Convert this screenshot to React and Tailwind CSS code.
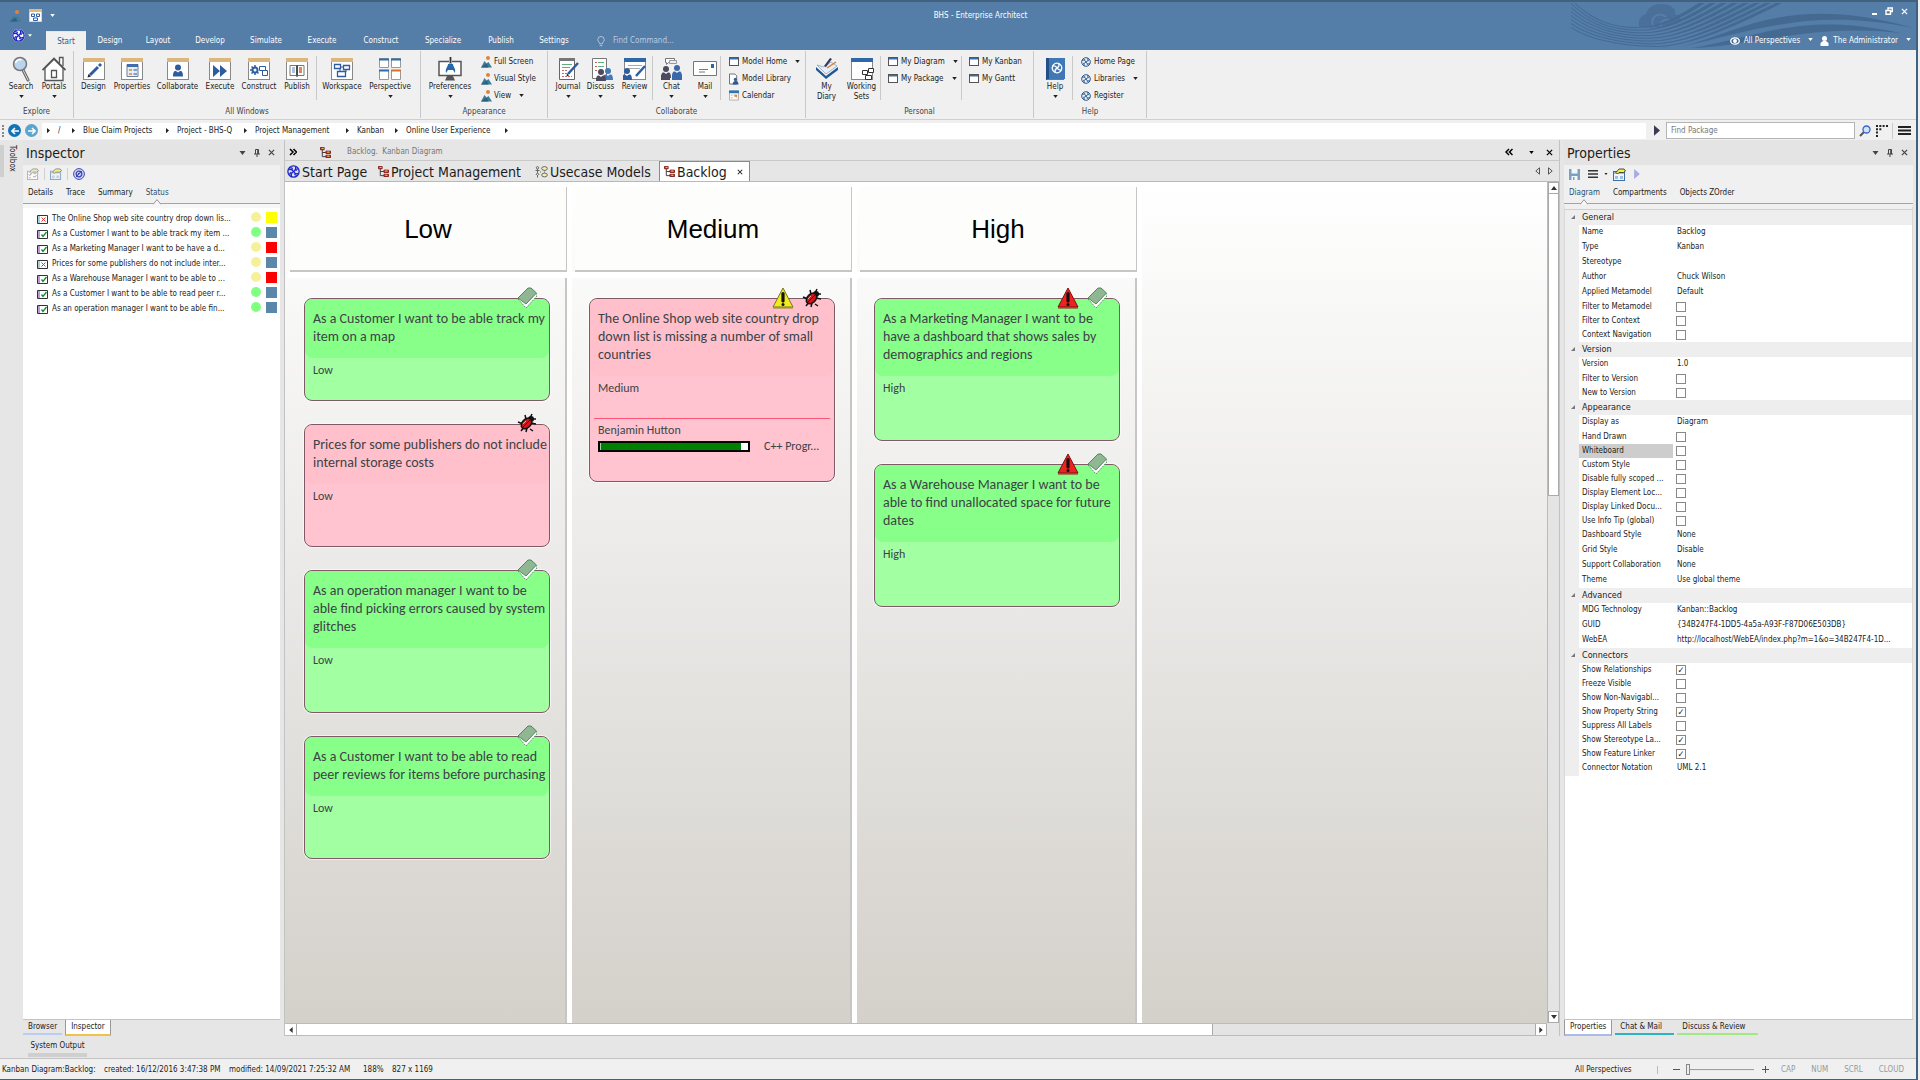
import React, { useState } from 'react'

/* ---------- small icons ---------- */

const Logo = ({ className = 'size-3', color = '#2b5c94' }) => (
  <svg viewBox="0 0 12 12" className={className} fill="none" stroke={color} strokeWidth="1.2">
    <circle cx="6" cy="6" r="5.2" />
    <path d="M1.5 4.2c2.5-1 3.5.3 4.5 1.8s2.300 2.800 4.500 1.800M7.800 1.500c1 2.500-.3 3.500-1.800 4.500s-2.800 2.300-1.800 4.500" />
    <path d="M3 2.500c1 0 2 .5 2.300 1.500M9.500 3c0 1-.5 2-1.500 2.300M9 9.500c-1 0-2-.5-2.300-1.500M2.500 9c0-1 .5-2 1.500-2.300" />
  </svg>
)

const Down = ({ className = 'w-[5px] h-[3px]' }) => (
  <svg viewBox="0 0 6 4" className={className} fill="currentColor"><path d="M0 0h6L3 4z" /></svg>
)

const Right = ({ className = 'w-1 h-[7px]' }) => (
  <svg viewBox="0 0 4 7" className={className} fill="currentColor"><path d="M0 0l4 3.500-4 3.500z" /></svg>
)

const Cross = ({ className = 'size-[7px]' }) => (
  <svg viewBox="0 0 8 8" className={className} stroke="currentColor" strokeWidth="1.400"><path d="M1 1l6 6M7 1L1 7" /></svg>
)

const Pin = () => (
  <svg viewBox="0 0 8 8" className="size-2" fill="none" stroke="#444"><path d="M2.500 5V.5h3V5M4.700 1v4M1 5h6M4 5v3" /></svg>
)

const Hill = ({ className = 'w-[11px] h-3' }) => (
  <svg viewBox="0 0 11 12" className={className}>
    <circle cx="7" cy="2" r="2" fill="#e0823d" />
    <path d="M0 11.500L3.500 5l2 2.500L7.500 6l3.500 5.500z" fill="#3b7f94" />
    <path d="M0 11.500l5.500-4 2 4z" fill="#2f5f86" />
  </svg>
)

const Tree = () => (
  <svg viewBox="0 0 12 12" className="size-[11px]">
    <path d="M2.500 3v7.500h4M2.500 6h4" fill="none" stroke="#333" />
    <path d="M.5.5h4v2.500h-4zM6.500 4.500h5V7h-5zM6.500 9h5v2.500h-5z" fill="#d9533c" stroke="#7a1616" />
    <path d="M8 5.500h2M8 10h2M2 1.500h2" stroke="#f3cf5a" />
  </svg>
)

const UseCase = () => (
  <svg viewBox="0 0 13 12" className="w-[13px] h-3" fill="#f5efb0" stroke="#666">
    <circle cx="2.500" cy="1.800" r="1.200" /><path d="M2.500 3v3.500M.5 4.500h4M1 9l1.500-2.500L4 9M2.500 9v2.500" fill="none" />
    <ellipse cx="9.500" cy="2.500" rx="2.800" ry="1.900" /><ellipse cx="9.500" cy="9" rx="2.800" ry="1.900" />
    <path d="M9.500 4.500V7M5 6h2" strokeDasharray="1 1" />
  </svg>
)

const MiniWindow = () => (
  <svg viewBox="0 0 10 9" className="w-[10px] h-[9px]" fill="#fff"><rect x=".5" y=".5" width="9" height="8" stroke="#555" /><path d="M1 1h8v1.500H1z" fill="#3470ad" /></svg>
)

const MiniLibrary = () => (
  <svg viewBox="0 0 11 12" className="w-[10px] h-3"><path d="M.5.5h6l2 2v9h-8z" fill="#fff" stroke="#666" /><circle cx="7" cy="6.500" r="1.800" fill="#3a5ba0" /><path d="M4 12c0-5 6.500-5 6.500 0z" fill="#2f568f" /></svg>
)

const MiniCalendar = () => (
  <svg viewBox="0 0 11 11" className="w-[10px] h-[11px]"><path d="M.5.5h10v10H.5z" fill="#fff" stroke="#aaa" /><path d="M0 0h11v3H0z" fill="#2f75b5" /><path d="M2 5h2M5 5h1M2 8h2M8 8h1" stroke="#aaa" /><path d="M6 4.500h3v2.500H6z" fill="#e48330" /></svg>
)

const PropWindow = ({ dim }) => (
  <svg viewBox="0 0 13 13" className={dim ? 'size-3 opacity-60' : 'size-[13px]'}>
    <rect x=".5" y="3.500" width="11" height="9" fill="#eef4fb" stroke="#3e6fa3" />
    <path d="M1 4h10v2H1zM2 8h3v3H2zM7 8h3v3H7z" fill="#9dbfe0" />
    <path d="M3 4.500L6 1h5l1.500 2-2 1.500H6L4.500 6z" fill="#f4ef4a" stroke="#222" strokeWidth=".8" />
  </svg>
)

const ListWindow = () => (
  <svg viewBox="0 0 13 13" className="size-3 opacity-60">
    <rect x=".5" y="3.500" width="11" height="9" fill="#fff" stroke="#888" />
    <path d="M2 7l1 1 2-2M7 9l1 1 2-2" fill="none" stroke="#444" /><path d="M2 10.500h2M7 6h3" stroke="#888" />
    <path d="M3 4.500L6 1h5l1.500 2-2 1.500H6L4.500 6z" fill="#e8e3a0" stroke="#444" strokeWidth=".8" />
  </svg>
)

/* ---------- ribbon icons ---------- */

const Frame = ({ children, head = '#dcb67a' }) => (
  <svg viewBox="0 0 24 24" className="size-6">
    <rect x="1.500" y="1.500" width="21" height="21" fill="#fff" stroke="#888" />
    <path d="M1 1h22v4H1z" fill={head} />
    {children}
  </svg>
)

const Person = ({ x = 0, y = 0, fill = '#2e5d9f' }) => (
  <g transform={`translate(${x} ${y})`} fill={fill}>
    <circle cx="5" cy="3" r="3" />
    <path d="M0 12c0-7 3-6 5-4 2-2 5-3 5 4z" />
  </g>
)

const icons = {
  Search: (
    <svg viewBox="0 0 24 26" className="w-6 h-[26px]">
      <path d="M14 14l5 10" stroke="#666" strokeWidth="3" strokeLinecap="round" />
      <path d="M14 14l5 10" stroke="#ddd" strokeLinecap="round" />
      <circle cx="11" cy="8" r="6.500" fill="#b9d4ee" stroke="#777" strokeWidth="1.500" />
      <path d="M6.500 7c1-3 4-4 6-3" stroke="#fff" strokeWidth="1.500" fill="none" />
    </svg>
  ),
  Portals: (
    <svg viewBox="0 0 24 26" className="w-6 h-[26px]" fill="#fff" stroke="#555" strokeWidth="1.300">
      <path d="M17.500 7V1.500H21V10" /><path d="M3 12v12.500h18V12l-9-9z" /><path d="M.5 14L12 2.500 23.500 14" fill="none" strokeWidth="1.800" /><path d="M9.500 14.500h5v7h-5z" />
    </svg>
  ),
  Design: <Frame><path d="M8 18l8-8" stroke="#2e5d9f" strokeWidth="3" /><path d="M17 9l2-2" stroke="#2e5d9f" strokeWidth="3" /><path d="M5.500 20.500l1-3.500 2.500 2.500z" fill="#222" /></Frame>,
  Properties: <Frame><path d="M7 7.500h11v12H7z" fill="#e7edf5" stroke="#6a7f9a" /><path d="M7 7h11v3H7z" fill="#3f6ea8" /><path d="M9 12h3v2H9zM9 16h3v2H9z" fill="#d9a15b" /><path d="M13.500 12H17v2h-3.500zM13.500 16H17v2h-3.500z" fill="#7f9fc4" /></Frame>,
  Collaborate: <Frame><Person x={7} y={7.500} /></Frame>,
  Execute: <Frame><path d="M5 8l7 6-7 6zM12 8l7 6-7 6z" fill="#2e5d9f" /></Frame>,
  Construct: (
    <Frame>
      <circle cx="8" cy="13" r="2.500" fill="#fff" stroke="#2e5d9f" strokeWidth="2" /><path d="M8 8v2M8 16v2M3 13h2M4.500 9.500L6 11M11.500 16.500L10 15M4.500 16.500L6 15" stroke="#2e5d9f" strokeWidth="1.500" />
      <path d="M12.500 9.500h6v4h-6zM15.500 13.500h5v5h-5z" fill="#fff" stroke="#2e5d9f" />
    </Frame>
  ),
  Publish: <Frame><path d="M5 8.500h6.500v10H5zM12.500 8.500H19v10h-6.500z" fill="#fff" stroke="#777" /><path d="M12 8v12" stroke="#222" /><path d="M7 11h3M7 13h3M7 15h3" stroke="#5c86bd" /><path d="M14 10h3v6h-3z" fill="#dc8a55" /></Frame>,
  Workspace: <Frame><path d="M4.500 7.500h6v4h-6zM13.500 8.500h6v4h-6zM7.500 14.500h8v5h-8z" fill="#fff" stroke="#2e5d9f" strokeWidth="1.300" /><path d="M10 10h4M10 12v3M16 12v3" stroke="#2e5d9f" /></Frame>,
  Perspective: (
    <svg viewBox="0 0 24 24" className="size-6" fill="#fff" stroke="#999">
      <path d="M1.500 1.500h9v9h-9zM13.500 1.500h9v9h-9zM1.500 13.500h9v9h-9zM13.500 13.500h9v9h-9z" />
      <path d="M1 2.500h10M13 2.500h10M1 13.500h10" stroke="#2e6dac" strokeWidth="2" /><path d="M13 13.500h10" stroke="#d9702c" strokeWidth="2" />
    </svg>
  ),
  Preferences: (
    <svg viewBox="0 0 24 24" className="size-6">
      <path d="M1 4.500h22v14H1z" fill="#fff" stroke="#555" strokeWidth="1.500" /><path d="M9 19h6l2 4.500H7z" fill="#555" />
      <path d="M11 0h3v8h-3z" fill="#e39b3b" /><path d="M12.500 0v6" stroke="#333" />
      <path d="M8 16c-1-5 2-6 2-9h5c0 3 3 4 2 9l-2-3h-5z" fill="#2668ad" />
    </svg>
  ),
  Journal: (
    <svg viewBox="0 0 24 24" className="size-6">
      <path d="M3.500 1.500h15v21h-15z" fill="#fff" stroke="#666" /><path d="M3 1h16v3H3z" fill="#777" />
      <path d="M6 7.500h10M6 10.500h8" stroke="#5fae7d" /><path d="M6 13.500h6M6 16.500h6M6 19.500h10" stroke="#c56e6e" strokeDasharray="2 1" />
      <path d="M12 17L22 6" stroke="#2e5d9f" strokeWidth="2.500" /><path d="M10.500 19.500l.5-3 2 2z" fill="#222" />
    </svg>
  ),
  Discuss: (
    <svg viewBox="0 0 24 24" className="size-6">
      <path d="M3.500 1.500h14v20h-14z" fill="#fff" stroke="#777" /><path d="M6 5.500h2M6 9.500h2M6 13.500h2" stroke="#d05a5a" /><path d="M9 5.500h6M9 9.500h6" stroke="#5fae7d" />
      <Person x={14} y={11} fill="#4379b8" /><Person x={7} y={12} fill="#4b4a5e" />
    </svg>
  ),
  Review: (
    <Frame head="#2f68a8"><path d="M5 8.500h14M5 11.500h12" stroke="#aaa" /><path d="M13 19l9-10" stroke="#2e5d9f" strokeWidth="2.500" /><Person x={-1} y={11} /></Frame>
  ),
  Chat: (
    <svg viewBox="0 0 24 24" className="size-6">
      <path d="M5.500 1.500h9v4h-6l-2 2v-2h-1z" fill="#fff" stroke="#777" /><path d="M9.500 3.500h7v3h-7z" fill="#eee" stroke="#999" />
      <Person x={1} y={9} fill="#4b4a5e" /><path d="M1 18h9v5H1z" fill="#4b4a5e" /><Person x={12} y={8} fill="#3a68a8" /><path d="M12 18h10v5H12z" fill="#3a68a8" />
    </svg>
  ),
  Mail: (
    <svg viewBox="0 0 24 24" className="size-6"><path d="M.5 4.500h23v14H.5z" fill="#fff" stroke="#777" /><path d="M18 7h3v4h-3z" fill="#2668ad" /><path d="M6 12.500h9M6 15h6" stroke="#777" /></svg>
  ),
  Diary: (
    <svg viewBox="0 0 24 24" className="size-6"><path d="M1 10l10 9 12-9v3l-12 9L1 13z" fill="#1f5792" /><path d="M2 8l9 9 11-8-6-4-7 5z" fill="#e9eef5" stroke="#8ea3bd" strokeWidth=".8" /><path d="M9 9l6-8 2 1-6 8z" fill="#3a3a55" /><path d="M12 11L21 5" stroke="#d38235" strokeWidth="1.500" /></svg>
  ),
  Sets: (
    <Frame head="#2f68a8"><path d="M12.500 13.500h5v4h-5zM18.500 11.500h5v4h-5zM15.500 18.500h6v4h-6z" fill="#fff" stroke="#333" /></Frame>
  ),
  Help: (
    <svg viewBox="0 0 24 24" className="size-6"><path d="M3 1h19v21H3z" fill="#3f78b5" /><path d="M3 1h3v22H3z" fill="#234f86" /><path d="M4 22.500h17" stroke="#777" /><g transform="translate(8 5)" fill="none" stroke="#fff" strokeWidth="1.300"><circle cx="6" cy="6" r="4.800" /><path d="M1.500 4.200c3-1 3.500.5 4.500 1.800s2 2.800 4.500 1.800M7.800 1.500c1 3-.5 3.500-1.800 4.500s-2.800 2-1.800 4.500" /></g></svg>
  ),
}

/* ---------- ribbon ---------- */

const Big = ({ icon, label, second, arrow, className }) => (
  <button className={`${className} flex flex-col items-center shrink-0 pt-[5px]`}>
    <span className="h-[26px] flex items-center">{icons[icon]}</span>
    <span className="leading-[10px] whitespace-nowrap">{label}</span>
    {second && <span className="leading-[9px]">{second}</span>}
    {arrow && <Down className="w-[5px] h-[3px] mt-[3px]" />}
  </button>
)

const Small = ({ icon, label, arrow }) => (
  <button className="flex items-center h-[17px] whitespace-nowrap">
    <span className="w-[13px] flex shrink-0">{icon}</span>
    {label}
    {arrow && <Down className="w-[5px] h-[3px] ml-2" />}
  </button>
)

const Stack = ({ children, className }) => <div className={`${className} flex flex-col pt-[2px] shrink-0`}>{children}</div>

const Sep = () => <span className="w-px h-11 mt-[5px] bg-[#c9c9c9] shrink-0"></span>

const Group = ({ title, className, children }) => (
  <section className={`${className} shrink-0 h-[67px] mt-px border-r border-[#c9c9c9] flex flex-col justify-between`}>
    <div className="flex px-1">{children}</div>
    <h2 className="text-center leading-3 text-[#444]">{title}</h2>
  </section>
)

const Ribbon = () => (
  <div className="h-[70px] flex bg-[#f0f0f0] border-b border-[#cfcfcf] text-[#222] overflow-hidden">
    <Group title="Explore" className="w-[74px]">
      <Big icon="Search" label="Search" arrow className="w-[34px]" />
      <Big icon="Portals" label="Portals" arrow className="w-[32px]" />
    </Group>
    <Group title="All Windows" className="w-[347px]">
      <Big icon="Design" label="Design" className="w-[31px]" />
      <Big icon="Properties" label="Properties" className="w-[46px]" />
      <Big icon="Collaborate" label="Collaborate" className="w-[45px]" />
      <Big icon="Execute" label="Execute" className="w-10" />
      <Big icon="Construct" label="Construct" className="w-[38px]" />
      <Big icon="Publish" label="Publish" className="w-[38px]" />
      <Sep />
      <Big icon="Workspace" label="Workspace" className="w-[50px]" />
      <Big icon="Perspective" label="Perspective" arrow className="w-[46px]" />
    </Group>
    <Group title="Appearance" className="w-[127px]">
      <Big icon="Preferences" label="Preferences" arrow className="w-[50px]" />
      <Stack className="ml-[6px]">
        <Small icon={<Hill />} label="Full Screen" />
        <Small icon={<Hill />} label="Visual Style" />
        <Small icon={<Hill />} label="View" arrow />
      </Stack>
    </Group>
    <Group title="Collaborate" className="w-[258px]">
      <Big icon="Journal" label="Journal" arrow className="w-8" />
      <Big icon="Discuss" label="Discuss" arrow className="w-[33px]" />
      <Big icon="Review" label="Review" arrow className="w-[35px]" />
      <Sep />
      <Big icon="Chat" label="Chat" arrow className="w-[37px]" />
      <Big icon="Mail" label="Mail" arrow className="w-[30px]" />
      <Sep />
      <Stack className="ml-2">
        <Small icon={<MiniWindow />} label="Model Home" arrow />
        <Small icon={<MiniLibrary />} label="Model Library" />
        <Small icon={<MiniCalendar />} label="Calendar" />
      </Stack>
    </Group>
    <Group title="Personal" className="w-[228px]">
      <Big icon="Diary" label="My" second="Diary" className="w-[33px]" />
      <Big icon="Sets" label="Working" second="Sets" className="w-[37px]" />
      <Sep />
      <Stack className="ml-[7px] w-[73px]">
        <Small icon={<MiniWindow />} label="My Diagram" arrow />
        <Small icon={<MiniWindow />} label="My Package" arrow />
      </Stack>
      <Sep />
      <Stack className="ml-[7px]">
        <Small icon={<MiniWindow />} label="My Kanban" />
        <Small icon={<MiniWindow />} label="My Gantt" />
      </Stack>
    </Group>
    <Group title="Help" className="w-[113px]">
      <Big icon="Help" label="Help" arrow className="w-[34px]" />
      <Sep />
      <Stack className="ml-2">
        <Small icon={<Logo className="size-[10px]" />} label="Home Page" />
        <Small icon={<Logo className="size-[10px]" />} label="Libraries" arrow />
        <Small icon={<Logo className="size-[10px]" />} label="Register" />
      </Stack>
    </Group>
  </div>
)

/* ---------- title bar ---------- */

const menu = [
  ['Start', 'w-10'], ['Design', 'w-12'], ['Layout', 'w-12'], ['Develop', 'w-14'], ['Simulate', 'w-14'], ['Execute', 'w-14'],
  ['Construct', 'w-[62px]'], ['Specialize', 'w-[62px]'], ['Publish', 'w-[54px]'], ['Settings', 'w-[52px]'],
]

// thin at the left, wider where it leaves through the top edge
const wave = (k) => {
  const low = 24 + 2.700 * k
  return `M0 ${4 * k - 4}C20 ${16 + 3 * k} ${40 + 2 * k} ${low} ${65 + 3 * k} ${low}S${105 + 8 * k} ${14 + k} ${128 + 11 * k} 0h6` +
    `C${110 + 8 * k} ${16 + k} ${90 + 4 * k} ${low + 1} ${65 + 3 * k} ${low + 1}S20 ${17 + 3 * k} 0 ${4 * k - 3}z`
}

const Waves = () => (
  <svg viewBox="0 0 345 46" className="absolute right-0 top-[1px] w-[345px] h-[46px]" fill="#456a92">
    <path d="M68 24c-1-7 2-12 7-13 2-9 12-12 22-9 6 2 8 6 7 9 5 2 7 5 6 7-8 5-22 8-42 6z" fill="#4a7099" />
    <path d="M82 23c-3-9 5-15 13-9M90 24c-2-6 5-9 10-6" fill="none" stroke="#547da8" strokeWidth="2" />
    {[0, 1, 2, 3, 4, 5, 6, 7].map((k) => <path key={k} d={wave(k)} />)}
    <path d="M110 44C170 28 220-10 343 25 240 5 190 26 110 44z" />
    <path d="M120 45C190 34 230 8 330 30 240 20 190 42 120 45z" />
  </svg>
)

const TitleBar = () => (
  <header className="relative h-[50px] bg-[#547da8] border-t-2 border-[#41617f] text-white flex flex-col justify-between">
    <Waves />
    <div className="relative flex items-center justify-between h-[28px] pl-[10px] pr-2">
      <div className="flex items-center gap-2">
        <Hill />
        <svg viewBox="0 0 13 13" className="size-[13px]"><path d="M.5.5h12v12H.5z" fill="#fff" stroke="#cfd8e2" /><path d="M0 0h13v3H0z" fill="#e2b979" /><path d="M2.500 5h3v2.500h-3zM7.500 5h3v2.500h-3zM4.500 9h4v2.500h-4z" fill="none" stroke="#2e5d9f" /></svg>
        <Down className="w-[5px] h-[3px]" />
      </div>
      <h1 className="pl-[34px]">BHS - Enterprise Architect</h1>
      <div className="flex items-center gap-2 pb-[9px]">
        <button aria-label="Minimize" className="w-[5px] h-[2px] bg-white mt-[5px]"></button>
        <button aria-label="Restore"><svg viewBox="0 0 8 8" className="size-2" fill="none" stroke="#fff" strokeWidth="1.400"><path d="M3 3V1h4.300v3.500H5.500M1 3.500h4.500v3.800H1z" /></svg></button>
        <button aria-label="Close"><Cross /></button>
      </div>
    </div>
    <div className="relative flex items-end justify-between">
      <nav className="flex items-end">
        <button aria-label="Application menu" className="w-[46px] h-[21px] flex items-start gap-[3px] pl-[12px]">
          <span className="rounded-full bg-white"><Logo className="size-[13px]" color="#1a24c8" /></span>
          <Down className="w-1 h-[3px] mt-[5px]" />
        </button>
        {menu.map(([name, w], i) => (
          <button key={name} className={`${w} ${i === 0 ? 'bg-[#f0f0f0] text-[#2b5c94] border-t border-[#dfe6ee]' : ''} h-[19px] pt-px text-center`}>{name}</button>
        ))}
        <label className="flex items-center h-[19px] pt-px pl-[17px]">
          <svg viewBox="0 0 8 12" className="w-2 h-[11px] mr-2" fill="none" stroke="#b9cbe0"><path d="M2.500 8.500C2.500 7 .5 6 .5 4a3.500 3.500 0 017 0c0 2-2 3-2 4.500zM2.500 10.500h3" /></svg>
          <input aria-label="Find Command" placeholder="Find Command..." className="w-24 bg-transparent outline-none placeholder:text-[#b9cbe0]" />
        </label>
      </nav>
      <div className="flex items-center h-[19px] pt-px pr-[5px]">
        <button className="flex items-center">
          <svg viewBox="0 0 10 8" className="w-[10px] h-2 mr-1" fill="none" stroke="#fff" strokeWidth="1.300"><ellipse cx="5" cy="4" rx="4.300" ry="3.200" /><circle cx="5" cy="4" r="1.300" fill="#fff" /></svg>
          All Perspectives
          <Down className="w-[5px] h-[3px] ml-2 mb-1" />
        </button>
        <button className="flex items-center ml-[7px]">
          <svg viewBox="0 0 9 10" className="w-[9px] h-[10px] mr-1" fill="#fff"><circle cx="4.500" cy="2.500" r="2.500" /><path d="M.5 10V7l2.500-2h3l2.500 2v3z" /></svg>
          The Administrator
          <Down className="w-[5px] h-[3px] ml-2 mb-1" />
        </button>
      </div>
    </div>
  </header>
)

/* ---------- breadcrumb ---------- */

const crumbs = [['/', 'w-[25px]'], ['Blue Claim Projects', 'w-[94px]'], ['Project - BHS-Q', 'w-[78px]'], ['Project Management', 'w-[102px]'], ['Kanban', 'w-[49px]'], ['Online User Experience', 'w-[110px]']]

const NavBar = () => (
  <div className="h-5 flex items-center bg-[#f0f0f0] pr-1 pt-px">
    <span className="h-3 ml-[2px] mr-1 border-l-2 border-dotted border-[#888]"></span>
    <button aria-label="Back" className="size-[13px] rounded-full bg-[#1273b8] text-white flex items-center justify-center"><svg viewBox="0 0 8 8" className="size-2" fill="none" stroke="#fff" strokeWidth="1.600"><path d="M8 4H1M4 1L1 4l3 3" /></svg></button>
    <button aria-label="Forward" className="ml-1 size-[13px] rounded-full bg-[#5aa5cf] flex items-center justify-center"><svg viewBox="0 0 8 8" className="size-2" fill="none" stroke="#fff" strokeWidth="1.600"><path d="M0 4h7M4 1l3 3-3 3" /></svg></button>
    <nav className="flex flex-1 items-center h-4 bg-white ml-1 pl-[5px] text-[#222]">
      {crumbs.map(([name, w]) => (
        <span key={name} className={`${w} flex items-center whitespace-nowrap`}><Right className="w-[3px] h-[7px] mr-2" /><a href="#">{name}</a></span>
      ))}
      <Right className="w-[3px] h-[7px]" />
    </nav>
    <button aria-label="Go" className="ml-2 text-[#3b3b52]"><Right className="w-[6px] h-[11px]" /></button>
    <input aria-label="Find Package" placeholder="Find Package" className="ml-[6px] w-[189px] h-[17px] bg-white border border-[#b5b5b5] px-1 outline-none placeholder:text-[#777]" />
    <button aria-label="Search" className="ml-1"><svg viewBox="0 0 12 12" className="size-3" fill="#cfe3fa"><path d="M1 11l4-4" stroke="#555" strokeWidth="2" /><circle cx="7.500" cy="4.500" r="3.500" stroke="#3b62c4" strokeWidth="1.300" /></svg></button>
    <button aria-label="Grid" className="ml-[5px]"><svg viewBox="0 0 12 12" className="size-3" fill="#222"><path d="M0 0h2v2H0zM3.300 0h2v2h-2zM6.600 0h2v2h-2zM10 0h2v2h-2zM0 3.300h2v2H0zM3.300 3.300h2v2h-2zM0 6.600h2v2H0zM0 10h2v2H0z" /></svg></button>
    <button aria-label="Menu" className="ml-1 mr-px pl-[5px] border-l border-[#ccc] h-4 flex items-center"><svg viewBox="0 0 13 9" className="w-[13px] h-[9px]" fill="#222"><path d="M0 0h13v2H0zM0 3.500h13v2H0zM0 7h13v2H0z" /></svg></button>
  </div>
)

/* ---------- side panels ---------- */

const PanelTitle = ({ children }) => (
  <div className="h-[25px] flex items-center justify-between bg-[#e4e4e4] pl-[3px] pr-[5px]">
    <h2 className="text-[14px] leading-5">{children}</h2>
    <div className="flex items-center gap-[7px] text-[#444]">
      <button aria-label="Options"><Down className="w-[7px] h-1" /></button>
      <button aria-label="Pin"><Pin /></button>
      <button aria-label="Close"><Cross /></button>
    </div>
  </div>
)

const SubTabs = ({ tabs, active, className }) => (
  <div className={`${className} flex h-[21px] pt-1 pl-[5px] border-b border-[#a5a5a5] bg-[#f0f0f0]`}>
    {tabs.map((t) => (
      <button key={t} className={`relative h-[17px] pb-[6px] leading-[10px] ${t === active ? 'text-[#2b5273]' : 'text-[#222]'}`}>
        {t}
        {t === active && <svg viewBox="0 0 8 6" className="absolute left-1/2 -ml-1 -bottom-px w-2 h-[6px]" fill="#f7f7f7" stroke="#999"><path d="M0 5.500L4 .7l4 4.800" /></svg>}
      </button>
    ))}
  </div>
)

const BottomTabs = ({ tabs }) => (
  <div className="flex h-[17px] items-start border-t border-[#c4c4c4]">
    {tabs.map(([name, bar, active]) => (
      <button key={name} className={`${bar} ${active ? 'bg-white border-x border-x-[#999] h-4' : 'h-[15px]'} border-b-2 mr-[3px] px-[5px] leading-3`}>{name}</button>
    ))}
  </div>
)

const items = [
  ['The Online Shop web site country drop down lis...', false, 'bg-[#f6f09a]', 'bg-[#ffff00]'],
  ['As a Customer I want to be able track my item ...', true, 'bg-[#80ff80]', 'bg-[#5b88aa]'],
  ['As a Marketing Manager I want to be have a d...', true, 'bg-[#f6f09a]', 'bg-[#ff0000]'],
  ['Prices for some publishers do not include inter...', false, 'bg-[#f6f09a]', 'bg-[#5b88aa]'],
  ['As a Warehouse Manager I want to be able to ...', true, 'bg-[#f6f09a]', 'bg-[#ff0000]'],
  ['As a Customer I want to be able to read peer r...', true, 'bg-[#80ff80]', 'bg-[#5b88aa]'],
  ['As an operation manager I want to be able fin...', true, 'bg-[#80ff80]', 'bg-[#5b88aa]'],
]

const ItemIcon = ({ ok }) => (
  <svg viewBox="0 0 11 9" className="w-[11px] h-[9px] mr-1 mt-px shrink-0">
    <path d="M.5.5h10v8H.5z" fill="#fff" stroke="#333" /><path d="M1 1h2v7H1z" fill={ok ? '#b89ad8' : '#a9cfd0'} />
    {ok ? <path d="M4.500 4.500l1.500 2 3.500-4.500" fill="none" stroke="#118a2a" strokeWidth="1.300" /> : <path d="M4.500 2.500l4 4M8.500 2.500l-4 4" stroke="#d33" />}
  </svg>
)

const Inspector = () => (
  <aside className="w-[257px] shrink-0 flex flex-col">
    <PanelTitle>Inspector</PanelTitle>
    <div className="flex items-center h-[18px] bg-[#f0f0f0] pl-1">
      <button aria-label="List options"><ListWindow /></button>
      <button aria-label="Properties" className="border-x border-[#d0d0d0] px-[5px] mx-[5px]"><PropWindow dim /></button>
      <button aria-label="Refresh">
        <svg viewBox="0 0 12 12" className="size-3" fill="#d5d8f2" stroke="#3d49b5"><circle cx="6" cy="6" r="5.400" /><circle cx="6" cy="6" r="2.800" strokeWidth="1.300" /><path d="M3 9l6-6M4.500 6.500l2-2" /></svg>
      </button>
    </div>
    <SubTabs tabs={['Details', 'Trace', 'Summary', 'Status']} active="Status" className="gap-[13px]" />
    <ul className="flex-1 bg-white border-t-4 border-[#f6f6f6] pt-[3px]">
      {items.map(([text, ok, dot, box]) => (
        <li key={text} className="flex items-center h-[15px] pl-[14px] pr-[3px]">
          <ItemIcon ok={ok} />
          <span className="flex-1 whitespace-nowrap text-[#222]">{text}</span>
          <span className={`${dot} size-[10px] rounded-full mr-[5px] mb-[3px]`}></span>
          <span className={`${box} size-[11px] mb-[3px]`}></span>
        </li>
      ))}
    </ul>
    <BottomTabs tabs={[['Browser', 'border-b-[#b9cdf5]', false], ['Inspector', 'border-b-[#f0c24a]', true]]} />
  </aside>
)

const sections = [
  ['General', [['Name', 'Backlog'], ['Type', 'Kanban'], ['Stereotype', ''], ['Author', 'Chuck Wilson'], ['Applied Metamodel', 'Default'], ['Filter to Metamodel', false], ['Filter to Context', false], ['Context Navigation', false]]],
  ['Version', [['Version', '1.0'], ['Filter to Version', false], ['New to Version', false]]],
  ['Appearance', [['Display as', 'Diagram'], ['Hand Drawn', false], ['Whiteboard', false], ['Custom Style', false], ['Disable fully scoped ...', false], ['Display Element Loc...', false], ['Display Linked Docu...', false], ['Use Info Tip (global)', false], ['Dashboard Style', 'None'], ['Grid Style', 'Disable'], ['Support Collaboration', 'None'], ['Theme', 'Use global theme']]],
  ['Advanced', [['MDG Technology', 'Kanban::Backlog'], ['GUID', '{34B247F4-1DD5-4a5a-A93F-F87D06E503DB}'], ['WebEA', 'http://localhost/WebEA/index.php?m=1&o=34B247F4-1D...']]],
  ['Connectors', [['Show Relationships', true], ['Freeze Visible', false], ['Show Non-Navigabl...', false], ['Show Property String', true], ['Suppress All Labels', false], ['Show Stereotype La...', true], ['Show Feature Linker', true], ['Connector Notation', 'UML 2.1']]],
]

const Row = ({ name, value }) => {
  const isCheck = typeof value === 'boolean'
  const id = name.replace(/\W+/g, '-')
  return (
    <tr className={isCheck ? 'h-[14px]' : 'h-[15px]'}>
      <td className="w-[14px] bg-[#eeeeee]"></td>
      <th scope="row" className={`w-[94px] pl-[3px] text-left font-normal ${name === 'Whiteboard' ? 'bg-[#cdcdcd]' : ''}`}>
        {isCheck ? <label htmlFor={id}>{name}</label> : name}
      </th>
      <td className={isCheck ? 'pl-[3px]' : 'pl-1'}>
        {isCheck ? (
          <input id={id} type="checkbox" defaultChecked={value} className="block appearance-none size-[10px] border border-[#888] bg-white checked:after:content-['✓'] after:block after:text-[9px] after:leading-[8px] after:text-center after:font-bold" />
        ) : value}
      </td>
    </tr>
  )
}

const Properties = () => (
  <aside className="w-[349px] shrink-0 flex flex-col mr-[3px]">
    <PanelTitle>Properties</PanelTitle>
    <div className="flex items-center h-[18px] bg-[#f0f0f0] pl-[5px]">
      <button aria-label="Save"><svg viewBox="0 0 11 11" className="size-[11px]"><path d="M0 0h11v11H0z" fill="#7d9fc0" /><path d="M2.500 0h6v4.500h-6zM2.500 7h6v4h-6z" fill="#f3f6fa" /><path d="M4 8h1.500v3H4z" fill="#7d9fc0" /></svg></button>
      <button aria-label="List" className="ml-2 flex items-center gap-[6px]"><svg viewBox="0 0 10 8" className="w-[10px] h-2" fill="#333"><path d="M0 0h10v1.500H0zM0 3.300h10v1.500H0zM0 6.500h10V8H0z" /></svg><Down className="w-1 h-[2px]" /></button>
      <button aria-label="Properties" className="ml-[5px]"><PropWindow /></button>
      <button aria-label="Run" className="ml-2 text-[#a9a9e6]"><Right className="w-[6px] h-[10px]" /></button>
    </div>
    <SubTabs tabs={['Diagram', 'Compartments', 'Objects ZOrder']} active="Diagram" className="gap-[13px]" />
    <div className="flex-1 bg-white border-t-[5px] border-t-[#f0f0f0] border-x border-x-[#d8d8d8]">
      <table className="w-full table-fixed border-collapse leading-[10px] text-[#222] border-t border-[#d0d0d0]">
        <colgroup><col className="w-[14px]" /><col className="w-[94px]" /><col /></colgroup>
        {sections.map(([title, rows]) => (
          <tbody key={title}>
            <tr className="h-[15px] bg-[#eeeeee]">
              <td><svg viewBox="0 0 4 4" className="size-1 ml-[6px]" fill="#777"><path d="M4 0v4H0z" /></svg></td>
              <th colSpan="2" className="pl-[3px] text-left font-normal text-[9px]">{title}</th>
            </tr>
            {rows.map(([name, value]) => <Row key={name} name={name} value={value} />)}
          </tbody>
        ))}
      </table>
    </div>
    <BottomTabs tabs={[['Properties', 'border-b-[#a9bce8]', true], ['Chat & Mail', 'border-b-[#2fb3c0] w-[59px] text-left', false], ['Discuss & Review', 'border-b-[#a0ea80] w-[81px] text-left', false]]} />
  </aside>
)

/* ---------- kanban board ---------- */

const badges = {
  note: <svg viewBox="0 0 20 22" className="w-5 h-[22px]"><path d="M1 12l8 9L20 9l-1-3" fill="#fff" stroke="#5c9468" strokeDasharray="2 1" /><path d="M1 11L11 1h3l5.500 5L9 17z" fill="#8fb792" stroke="#4e8a5a" /></svg>,
  bug: (
    <svg viewBox="0 0 20 20" className="size-5">
      <path d="M1 9l5 2M4 18l3-4M9 19l1-4M13 16l3 2M14 10l5 1M8 2l1 4M13 5l2-4M14 6h5" stroke="#111" strokeWidth="1.500" />
      <circle cx="14" cy="6" r="3" fill="#111" /><ellipse cx="9.500" cy="10.500" rx="6" ry="4.300" transform="rotate(-45 9.500 10.500)" fill="#d2161c" stroke="#111" strokeWidth="1.500" />
      <path d="M6 14l7-7" stroke="#111" /><path d="M6 11l3-3" stroke="#ff9a9a" />
    </svg>
  ),
  warn: <svg viewBox="0 0 22 22" className="size-[22px]"><path d="M11 1L1 20h20z" fill="#efec1c" stroke="#77722a" strokeLinejoin="round" /><path d="M1 21h20" stroke="#8b8620" /><path d="M11 6.500v7.500" stroke="#111" strokeWidth="3.200" strokeLinecap="round" /><circle cx="11" cy="17.500" r="1.500" fill="#111" /></svg>,
  alert: <svg viewBox="0 0 22 22" className="size-[22px]"><path d="M11 1L1 20h20z" fill="#ee2222" stroke="#7d1010" strokeLinejoin="round" /><path d="M1 21h20" stroke="#8b1a1a" /><path d="M11 6.500v7.500" stroke="#111" strokeWidth="3.200" strokeLinecap="round" /><circle cx="11" cy="17.500" r="1.500" fill="#111" /></svg>,
}

const columns = [
  ['Low', [
    { title: 'As a Customer I want to be able track my item on a map', size: 'min-h-[42px]', marks: ['note'] },
    { title: 'Prices for some publishers do not include internal storage costs', pink: true, size: 'min-h-[62px]', marks: ['bug'] },
    { title: 'As an operation manager I want to be able find picking errors caused by system glitches', size: 'min-h-[64px]', marks: ['note'] },
    { title: 'As a Customer I want to be able to read peer reviews for items before purchasing', size: 'min-h-[62px]', marks: ['note'] },
  ]],
  ['Medium', [
    { title: 'The Online Shop web site country drop down list is missing a number of small countries', pink: true, size: 'min-h-[105px]', marks: ['warn', 'bug'], resource: { name: 'Benjamin Hutton', role: 'C++ Progr...', done: 95 } },
  ]],
  ['High', [
    { title: 'As a Marketing Manager I want to be have a dashboard that shows sales by demographics and regions', size: 'min-h-[64px]', marks: ['alert', 'note'] },
    { title: 'As a Warehouse Manager I want to be able to find unallocated space for future dates', size: 'min-h-[64px]', marks: ['alert', 'note'] },
  ]],
]

const Card = ({ card, status }) => (
  <article className={`relative w-[246px] rounded-lg border border-[#7d5a66] ring-1 ring-white/60 font-['Carlito','Lato',sans-serif] text-[#3c4347] ${card.pink ? 'bg-[#ffc4cf]' : 'bg-[#a2ffa2]'}`}>
    <div className="absolute -top-3 right-3 flex items-center gap-2">
      {card.marks.map((m) => <span key={m}>{badges[m]}</span>)}
    </div>
    <h3 className={`rounded-lg pt-[11px] pb-3 pl-2 text-[14px] leading-[18px] ${card.pink ? 'bg-[#ffc0cb]' : 'bg-[#88ff88]'}`}>{card.title}</h3>
    <div className={`${card.size} pt-1 px-2 text-[12px] leading-4`}>
      <p>{status}</p>
      {card.resource && (
        <div className="mt-[22px] -mx-1 px-1 border-t border-[#ff5577]">
          <p className="pt-[3px]">{card.resource.name}</p>
          <div className="flex items-center gap-[14px]">
            <div className="w-[152px] h-[11px] border-2 border-black bg-white"><div className="h-full bg-[#008000] border-l border-[#9fd09f]" style={{ width: `${card.resource.done}%` }}></div></div>
            <p>{card.resource.role}</p>
          </div>
        </div>
      )}
    </div>
  </article>
)

const docTabs = [['Start Page', <Logo className="size-[13px]" color="#1a24c8" />, 'w-[91px]'], ['Project Management', <Tree />, 'w-[157px]'], ['Usecase Models', <UseCase />, 'w-[124px]']]

const Board = () => {
  const [ open, setOpen ] = useState(true)

  return (
    <main className="flex-1 min-w-0 flex flex-col border-x border-[#c2c2c2] mx-1">
      <div className="h-[21px] flex items-center bg-[#e6e6e6] border-b border-[#c9c9c9] pt-1 pl-1 pr-[6px] text-[#777]">
        <button aria-label="Expand" className="text-black"><svg viewBox="0 0 8 8" className="size-2" fill="none" stroke="currentColor" strokeWidth="1.500"><path d="M1 1l3 3-3 3M4.500 1l3 3-3 3" /></svg></button>
        <span className="ml-[23px] mr-4"><Tree /></span>
        <p className="flex-1">Backlog.&nbsp; Kanban Diagram</p>
        <div className="flex items-center gap-4 text-black">
          <button aria-label="Collapse"><svg viewBox="0 0 8 8" className="size-2" fill="none" stroke="currentColor" strokeWidth="1.500"><path d="M4 1L1 4l3 3M7.500 1l-3 3 3 3" /></svg></button>
          <button aria-label="Options"><Down /></button>
          <button aria-label="Close" className="-ml-1"><Cross /></button>
        </div>
      </div>
      <div className="h-[21px] flex items-end bg-[#e6e6e6] border-b border-[#b9b9b9] pl-[2px] text-[14px]">
        {docTabs.map(([name, icon, w]) => <button key={name} className={`${w} h-[19px] flex items-center gap-[2px] whitespace-nowrap`}>{icon}{name}</button>)}
        {open && (
          <div className="h-5 w-[91px] flex items-center bg-white border border-b-0 border-[#8a8a8a] pl-1 pr-[6px]">
            <Tree />
            <span className="flex-1 pl-[2px]">Backlog</span>
            <button aria-label="Close tab" onClick={() => setOpen(false)}><Cross className="size-[6px]" /></button>
          </div>
        )}
        <div className="ml-auto flex gap-2 h-full items-center pr-[6px]">
          <button aria-label="Previous tab"><svg viewBox="0 0 5 8" className="w-[5px] h-2" fill="none" stroke="#555"><path d="M4.500.8v6.400L.8 4z" /></svg></button>
          <button aria-label="Next tab"><svg viewBox="0 0 5 8" className="w-[5px] h-2" fill="none" stroke="#555"><path d="M.5.8v6.400L4.200 4z" /></svg></button>
        </div>
      </div>
      <div className="flex-1 flex">
        <div className="flex-1 min-w-0 flex pl-[2px] bg-linear-to-b from-white via-[#e9e8e6] to-[#d4d0ca]">
          {columns.map(([name, cards]) => (
            <section key={name} className="w-[285px] shrink-0 flex flex-col border-r-[5px] border-white">
              <h2 className="h-[85px] mt-[5px] ml-[3px] border-r border-b-2 border-[#c6c6c6] flex items-center justify-center font-['Liberation_Sans',sans-serif] text-[26px] text-black bg-[#fdfdfc]">{name}</h2>
              <div className="h-[6px] bg-white"></div>
              <div className="flex-1 border-r-2 border-[#c6c6c6] pl-[17px] pt-5 flex flex-col gap-[23px]">
                {cards.map((c) => <Card key={c.title} card={c} status={name} />)}
              </div>
            </section>
          ))}
        </div>
        <div className="w-3 flex flex-col bg-[#e4e4e4] border-l border-[#bbb]">
          <button aria-label="Scroll up" className="h-3 bg-white border border-[#aaa] flex items-center justify-center text-[#333]"><Down className="w-[6px] h-1 rotate-180" /></button>
          <div className="flex-1"><div className="h-[37%] bg-white border border-t-0 border-[#aaa]"></div></div>
          <button aria-label="Scroll down" className="h-3 bg-white border border-[#aaa] flex items-center justify-center text-[#333]"><Down className="w-[6px] h-1" /></button>
        </div>
      </div>
      <div className="h-[13px] flex bg-[#e4e4e4] border-y border-[#bbb] mr-3">
        <button aria-label="Scroll left" className="w-3 bg-white border-r border-[#aaa] flex items-center justify-center text-[#333]"><Right className="w-1 h-[6px] rotate-180" /></button>
        <div className="flex-1"><div className="w-[74%] h-full bg-white border-r border-[#aaa]"></div></div>
        <button aria-label="Scroll right" className="w-3 bg-white border-x border-[#aaa] flex items-center justify-center text-[#333]"><Right className="w-1 h-[6px]" /></button>
      </div>
    </main>
  )
}

/* ---------- status bar ---------- */

const StatusBar = () => (
  <footer className="h-[21px] flex items-center bg-[#f0f0f0] border-t border-[#c4c4c4] pt-px pl-[2px] pr-3 text-[#222]">
    <span className="w-[102px]">Kanban Diagram:Backlog:</span>
    <span className="w-[125px]">created: 16/12/2016 3:47:38 PM</span>
    <span className="w-[134px]">modified: 14/09/2021 7:25:32 AM</span>
    <span className="w-[29px]">188%</span>
    <span className="flex-1">827 x 1169</span>
    <span className="w-[82px]">All Perspectives</span>
    <span className="w-4 h-2 border-l border-[#bbb]"></span>
    <button aria-label="Zoom out" className="w-[7px] h-px bg-[#555]"></button>
    <input aria-label="Zoom" type="range" defaultValue="0" className="mx-[6px] w-[68px] h-3 appearance-none bg-linear-to-b from-transparent from-45% via-[#999] via-45% to-transparent to-55% [&::-webkit-slider-thumb]:appearance-none [&::-webkit-slider-thumb]:w-1 [&::-webkit-slider-thumb]:h-[11px] [&::-webkit-slider-thumb]:bg-[#eee] [&::-webkit-slider-thumb]:border [&::-webkit-slider-thumb]:border-[#888]" />
    <button aria-label="Zoom in" className="ml-[2px] mr-3"><svg viewBox="0 0 7 7" className="size-[7px]" stroke="#555"><path d="M0 3.500h7M3.500 0v7" /></svg></button>
    <div className="flex gap-4 text-[#999]"><span>CAP</span><span>NUM</span><span>SCRL</span><span>CLOUD</span></div>
  </footer>
)

const App = () => {
  return (
    <div className="min-h-screen bg-[#eef1f4] pr-[2px] flex flex-col">
      <div className="flex-1 flex flex-col bg-[#e6e6e6] border-r-2 border-b border-[#41617f] font-['DejaVu_Sans_Condensed','DejaVu_Sans',sans-serif] text-[8px] leading-[10px] text-[#1c1c1c]">
        <TitleBar />
        <Ribbon />
        <NavBar />
        <div className="flex-1 flex">
          <div className="w-[23px] shrink-0 flex items-start pt-[5px]">
            <span className="w-1 h-8 bg-[#cfcfcf] mr-[3px]"></span>
            <button className="[writing-mode:vertical-rl]">Toolbox</button>
          </div>
          <Inspector />
          <Board />
          <Properties />
        </div>
        <div className="h-[22px] flex items-end pl-7 pb-px">
          <button className="h-4 pb-[2px] border-b-4 border-[#cfcfcf] w-[59px]">System Output</button>
        </div>
        <StatusBar />
      </div>
    </div>
  )
}

export default App
